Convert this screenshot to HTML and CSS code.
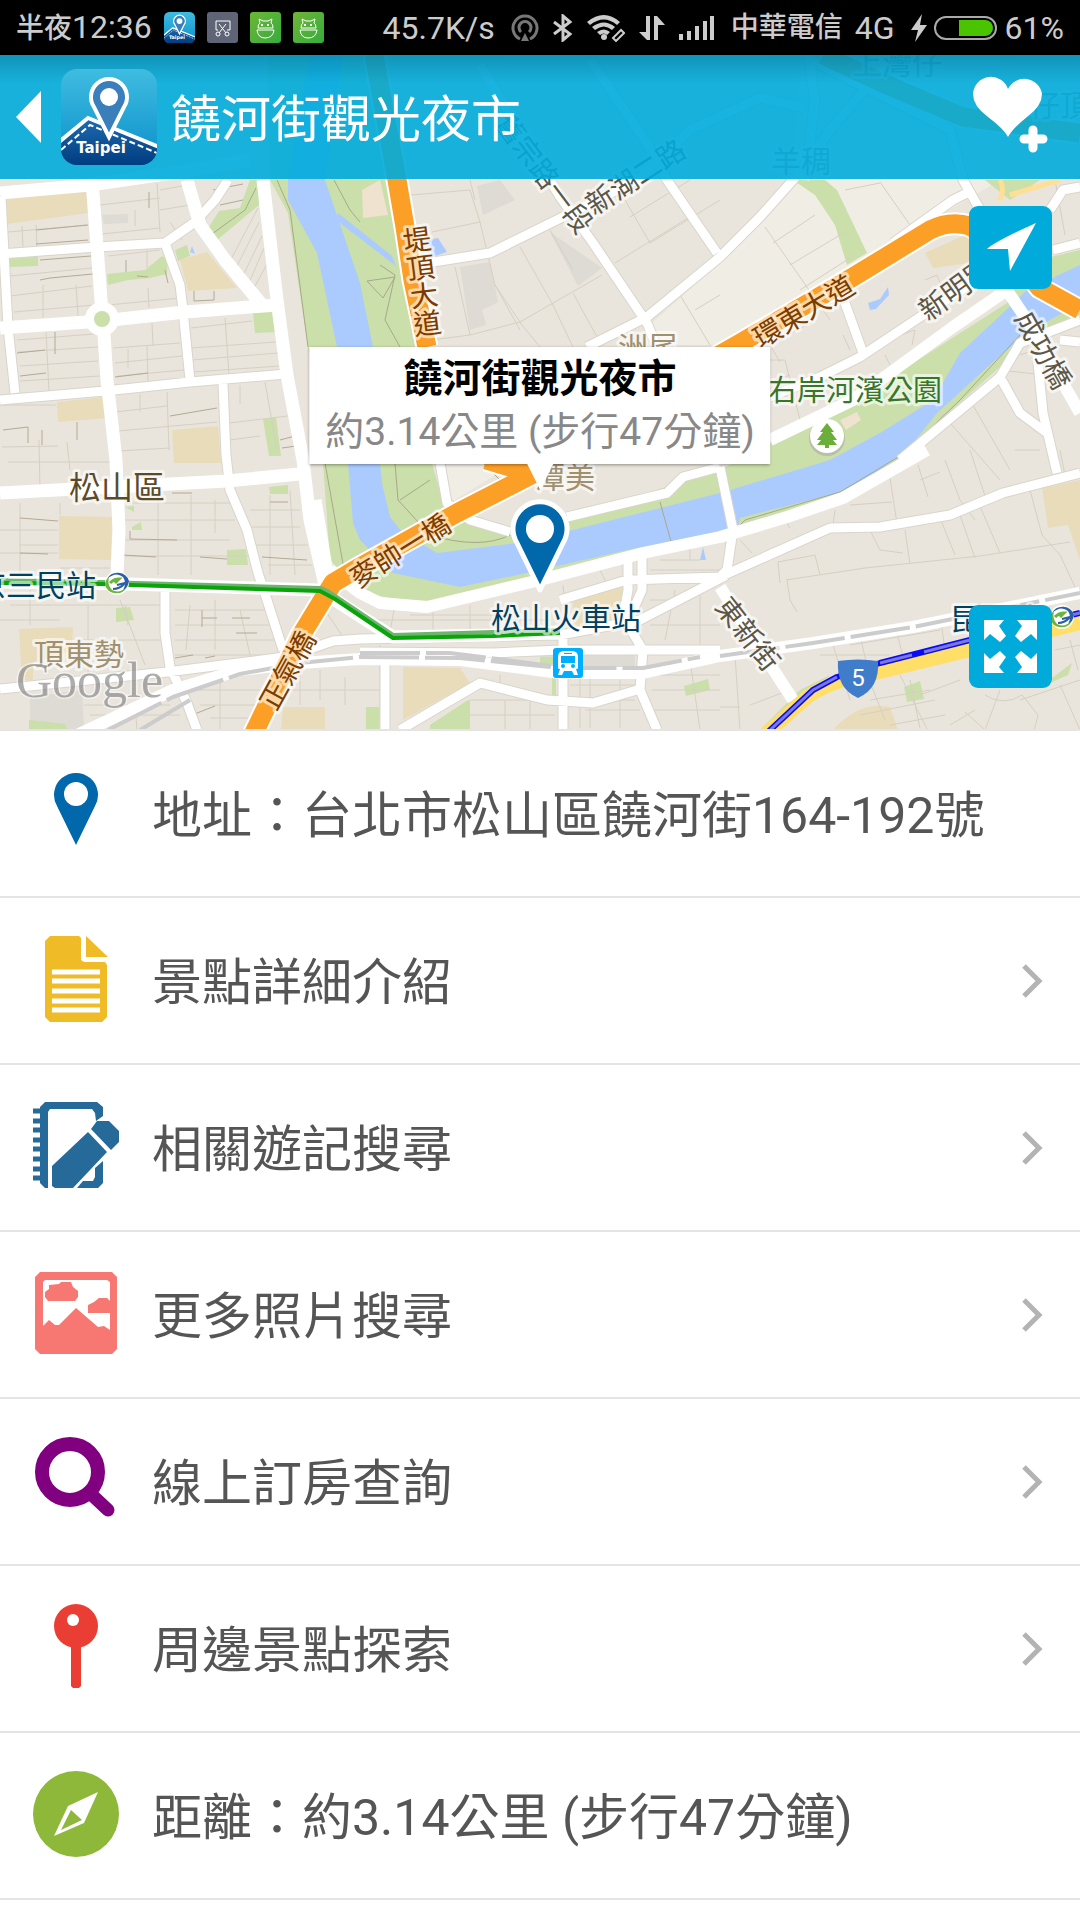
FILE: index.html
```html
<!DOCTYPE html>
<html lang="zh-Hant">
<head>
  <meta charset="UTF-8">
  <meta name="viewport" content="width=device-width, initial-scale=1.0">
  <title>饒河街觀光夜市</title>
  <link rel="stylesheet" href="styles.css">
</head>
<body>
  <!-- shared icons -->
  <svg class="defs" aria-hidden="true">
    <defs>
      <linearGradient id="skyFill" x1="0" y1="0" x2="0" y2="1">
        <stop offset="0" stop-color="#3fbce0"/>
        <stop offset="1" stop-color="#0a8fca"/>
      </linearGradient>
      <linearGradient id="groundFill" x1="0" y1="0" x2="0" y2="1">
        <stop offset="0" stop-color="#1f6cb0"/>
        <stop offset="1" stop-color="#003c80"/>
      </linearGradient>
      <linearGradient id="greenFill" x1="0" y1="0" x2="1" y2="1">
        <stop offset="0" stop-color="#6fb536"/>
        <stop offset="1" stop-color="#35ac3d"/>
      </linearGradient>
      <clipPath id="appClip"><rect width="96" height="96" rx="16"/></clipPath>
    </defs>
    <symbol id="appIcon" viewBox="0 0 96 96">
      <g clip-path="url(#appClip)">
        <rect width="96" height="96" fill="url(#skyFill)"/>
        <path d="M0 72L27 49L96 78V96H0Z" fill="url(#groundFill)"/>
        <path d="M-2 73L27 49L98 78" fill="none" stroke="#fff" stroke-width="4"/>
        <path d="M0 81L29 56L96 84" fill="none" stroke="#fff" stroke-width="2" stroke-dasharray="6 3"/>
        <path d="M48 68L33 38A18 18 0 1 1 63 38Z" fill="#3a7fbb" stroke="#fff" stroke-width="4"/>
        <circle cx="48" cy="28" r="9" fill="#fff"/>
        <text x="40" y="84" class="app-name" text-anchor="middle">Taipei</text>
      </g>
    </symbol>
    <symbol id="droidIcon" viewBox="0 0 31 31">
      <rect width="31" height="31" rx="3" fill="url(#greenFill)"/>
      <path d="M8 16Q8 12 10 11L9 7L13 9H18L22 7L21 11Q23 12 23 16ZM7 18H24Q23 26 15 26Q8 26 7 18Z" fill="none" stroke="#fff" stroke-width="1"/>
      <path d="M12 12v2M18 12v2" stroke="#fff" stroke-width="2"/>
    </symbol>
    <symbol id="metroIcon" viewBox="0 0 28 28">
      <circle cx="14" cy="14" r="12" fill="#fff"/>
      <path d="M4 10A12 12 0 0 1 26 12Q25 19 20 21Q24 14 20 8Q13 2 4 10Z" fill="#2c5fa5"/>
      <path d="M24 18A12 12 0 0 1 2 16Q2 11 6 8Q4 16 9 21Q16 25 24 18Z" fill="#6cb33f"/>
      <path d="M7 14Q11 10 16 10L12 14" fill="none" stroke="#6cb33f" stroke-width="3"/>
      <path d="M10 20Q17 20 22 14L14 16" fill="none" stroke="#2c5fa5" stroke-width="2"/>
    </symbol>
    <symbol id="chevron" viewBox="0 0 24 36">
      <path d="M3 3L18 18L3 33" fill="none" stroke="#b3b3b3" stroke-width="5"/>
    </symbol>
  </svg>

  <div class="status-bar">
    <div class="status-group">
      <span class="clock"><span class="cjk">半夜</span>12:36</span>
      <svg class="notice"><use href="#appIcon"/></svg>
      <svg class="notice" viewBox="0 0 31 31">
        <rect width="31" height="31" rx="3" fill="#5f6577"/>
        <path d="M11 18H9V9H23V18H20M12 12L19 21M19 12L12 21" fill="none" stroke="#fff" stroke-width="1"/>
        <circle cx="11" cy="22" r="2" fill="none" stroke="#fff"/>
        <circle cx="20" cy="22" r="2" fill="none" stroke="#fff"/>
      </svg>
      <svg class="notice"><use href="#droidIcon"/></svg>
      <svg class="notice"><use href="#droidIcon"/></svg>
    </div>
    <div class="status-group">
      <span>45.7K/s</span>
      <div class="signals">
        <svg width="28" height="30" viewBox="0 0 28 30" fill="none" stroke="#777" stroke-width="3">
          <path d="M9 26A12 12 0 1 1 19 26M10 19A6 6 0 1 1 18 19"/>
          <path d="M10 28L14 20L18 28Z" fill="#777" stroke="none"/>
        </svg>
        <svg width="20" height="28" viewBox="0 0 20 28" fill="none" stroke="#ccc" stroke-width="3">
          <path d="M1 8L17 20L10 26V2L17 8L1 20"/>
        </svg>
        <svg width="38" height="28" viewBox="0 0 38 28">
          <path d="M0 8Q17 -6 33 8L30 11Q17 0 3 11ZM5 13Q17 4 28 13L25 16Q17 9 8 16ZM10 18Q17 13 23 18L20 21Q17 18 13 21Z" fill="#ccc"/>
          <circle cx="17" cy="23" r="3" fill="#ccc"/>
          <path d="M30 20l4 -4l3 3l-5 5M31 19l-5 5l3 3l4 -4" fill="none" stroke="#ccc" stroke-width="2"/>
        </svg>
        <svg width="26" height="26" viewBox="0 0 26 26" fill="#ccc">
          <path d="M7 1h4v24H8L0 17H7ZM15 25V1h3l8 9h-7v15Z"/>
        </svg>
        <svg width="36" height="26" viewBox="0 0 36 26" fill="#ccc">
          <path d="M0 19h4v6H0zM8 16h4v9H8zM16 11h4v14h-4zM24 6h4v19h-4zM31 1h4v24h-4z"/>
        </svg>
      </div>
      <span class="carrier"><span class="cjk">中華電信</span> <span>4G</span></span>
      <div class="battery">
        <svg width="16" height="28" viewBox="0 0 16 28" fill="#ccc">
          <path d="M11 0L0 16H7L4 28L16 11H9Z"/>
        </svg>
        <svg width="64" height="26" viewBox="0 0 64 26">
          <rect x="1" y="2" width="61" height="22" rx="11" fill="none" stroke="#aaa" stroke-width="2"/>
          <path d="M25 5H51A8 8 0 0 1 51 21H25Z" fill="#4bc400"/>
        </svg>
        <span>61%</span>
      </div>
    </div>
  </div>

  <div class="map">
    <svg class="map-canvas" viewBox="0 55 1080 674" preserveAspectRatio="xMidYMid slice">
      <rect y="55" width="1080" height="674" fill="#e9e5dc"/>
      <path class="pale" d="M800 55H1000V180L893 243L740 345H660L650 325L720 262L793 180ZM443 463H515L450 503Z"/>
      <path class="block" d="M477 186L500 180L515 200L483 215ZM460 267L490 262L498 302L482 310L486 325L470 330ZM550 232L602 268L578 286ZM102 215L128 214L128 223L104 224ZM30 697L82 690L84 730L30 730ZM540 655H635V668H540Z"/>
      <path class="school" d="M4 198L86 188L88 213L7 224ZM180 260L207 252L237 288L188 291ZM57 402L104 397L107 418L58 422ZM172 430L218 426L221 463H174ZM59 516L112 517L111 560L59 559ZM19 629L73 627L72 650L33 663V680H22ZM283 707H325V730H281ZM403 667L460 668L470 683L403 720ZM573 593L627 587L613 623L573 627ZM1042 488L1080 480V523L1048 528ZM833 730Q860 700 890 707L898 730ZM925 253L970 233V263L933 268ZM1068 525L1080 523V560Z"/>

      <!-- river and parks -->
      <path class="park" d="M268 55H372L387 180L403 247L415 347L432 463L443 503L470 525L510 535L560 520L720 470L770 443L853 400L907 367L1007 303L1030 262L1080 250V315L1027 343L940 420L905 455L843 493L787 512L720 535L640 552L493 590Q420 612 360 590L330 560L323 463L308 347L288 213L270 180Z"/>
      <path class="park" d="M793 180H825L837 190L867 253L847 265L835 225L815 195ZM10 258L38 257V266L10 267ZM107 274L145 270L162 256L168 260L167 274L150 278L128 280L108 285ZM175 250L187 245L190 256L178 261ZM206 232L219 211L240 208L250 180H258L259 205L217 240ZM253 313L277 310L278 332L255 333ZM263 419L276 417L281 456L269 456ZM227 550L246 549L248 565H227ZM116 608L130 607L134 620L116 622ZM125 507L134 506L134 512ZM132 527L141 522L142 530H132ZM29 720L65 724L68 730H29ZM366 707H379V730H366ZM430 725L468 700H470V730H430ZM684 686L708 679L710 690L686 696ZM904 687L920 681L924 699L907 702ZM1052 678L1072 663L1068 675L1052 682ZM760 730L800 690L830 675L780 730ZM985 180H1040L1010 200ZM269 487L288 485V494H270ZM540 657H560L556 664H540ZM552 678H556V695H552Z"/>
      <path class="water" d="M310 55H343L325 180L360 283L373 347L380 463L382 483L390 517L403 533L437 553L517 543L573 530L720 493L830 460L880 433L933 400L960 353L1003 313L1027 290L1080 265V303L1027 333L1003 353L937 413L910 447Q870 480 837 493L740 518L737 530L720 532L627 550L527 573L460 587L393 573L360 540L353 523L348 463L337 347L317 253L288 200V180Z"/>
      <path class="water" d="M428 240L438 238L447 252L432 257ZM338 213L392 256L396 266L336 220ZM868 303L880 299L888 287L889 295L876 309L870 310ZM700 560L703 547L706 560ZM190 252L192 246L195 254Z"/>
      <path d="M840 420L857 412L861 420L846 430ZM362 190L380 180L388 215L363 218Z" fill="#efe2cf"/>

      <!-- lanes -->
      <path class="lane" d="M8 232L87 225M10 276L92 268M10 296L92 286M22 226L23 247M36 225L37 247M43 285L43 318M76 285L78 316M14 312L94 305M100 205L160 198M102 234L160 228M157 183L160 232M135 210V226M160 210L190 205M160 190L182 186M170 222L182 240M108 256L160 250M147 250V268M148 288L149 308M108 305L180 298M17 340L94 334M18 352L98 347M20 366L98 361M20 381L100 376M46 332L49 392M113 348L180 343M115 363L182 356M118 376L184 370M152 323L153 346M128 349V368M147 346L148 382M191 328L252 321M191 348L276 342M192 360L278 353M193 372L280 366M225 318L229 375M228 265L258 208M235 270L259 222M242 278L262 236M248 285L264 248M253 290L268 262M115 412L167 406M118 431L217 422M118 451L170 448M140 394L140 412M167 392L169 450M229 423L288 416M230 440L260 436M240 385V404M265 382L277 450M0 405H56M2 447L58 446M39 440L40 490M67 442L70 470M8 462H110M20 503V575M60 503V515M20 545H58M0 530H58M0 553H58M60 568H115M125 503H240M158 495V575M191 495V575M215 500V533M125 520H235M125 540H230M125 556H255M270 495V575M290 490L295 575M250 510H300M250 527H300M255 545H308M268 565H312M10 605H160M30 590V625M88 605V680M120 600L145 665M0 620H60M80 640H163M125 605L128 625M175 610H265M175 625H270M175 640H278M175 655H278M215 600V650M240 610L250 655M190 605L186 650M84 705H170M90 715H180M135 705L137 730M185 690H260M200 705H270M210 718H265M220 680V730M300 670V705M320 670V700M290 690H380M325 610L345 640M345 677V705M380 645V730M395 605L390 632M433 607V635M470 605V630M500 603V620M360 620H550M410 615H500M563 585L566 618M600 570L608 586M650 570H720M690 545V560M660 560H700M650 600H690M675 590L665 640M700 590V650M650 625H720M580 678V728M590 678V728M620 680V728M570 685H635M570 700H635M470 700H555M470 715H555M505 700V730M530 700V730M585 710H640M500 675V690M690 660L700 730M652 690H720M652 710H720M660 675H720"/>
      <path class="lane" d="M411 195L470 190L480 222L495 285L522 325L540 347M432 232L480 222M470 180L475 200M520 247L552 303L573 347M495 285L520 330M432 340L470 335L520 322L602 275M455 267L470 335M573 293L597 337M625 200L650 243M630 217L690 180M615 263L688 218M650 243L720 200M550 230L573 270M680 295L710 345M695 310L720 295M765 227L830 320M773 243L815 215M790 265L845 232M800 290L850 258M780 310L842 274M735 335L870 256M812 322L770 345M880 182L910 225M845 190L880 183M925 280L937 275L945 295M843 335L850 350M880 345L900 335L915 330L912 345M885 355L895 375M770 360H785L800 420M775 380L790 375M770 345L780 362M1000 370L1045 375M1020 355L1050 345M1055 180L1065 235M930 400L1000 480M970 400L1010 470M945 460L960 500L975 520M970 450L988 505M918 465L928 497M920 480L940 472M890 478L898 530M850 505L892 502M835 510L833 525M785 520L790 528M780 583L778 562L815 555L820 575M786 580L865 568L980 556L1070 542M787 580L790 600L797 612M871 532L880 550L903 553M905 530L910 564M940 518L955 555M960 515L975 558M980 506L1000 553M1030 490L1042 535L1060 555L1075 587M1015 450H1040M1060 450L1065 475M740 540L752 553M833 645L850 700M860 635L868 670M895 625L905 665M940 615L945 650M820 655H890M850 645L940 630M870 682L885 720M900 675L930 735M910 680L920 728M870 700L930 690M860 715L935 700M890 725L945 715M920 695L960 680M735 655L740 730M720 707H740M750 705L790 690M1020 700L1080 680M1060 685L1080 730M1055 650L1080 645M1070 640L1078 670M985 695A32 32 0 0 0 1022 695M965 712L985 730L1000 690M1022 695L1038 715L1033 735M975 710L950 725"/>
      <path class="lane dark" d="M36 230L88 225M36 244L88 240M149 192L149 208M40 260L91 256M40 280L50 278L93 274M126 260V272M137 276L148 277M194 291V301L214 300V291M17 353L45 350M20 376L46 373M55 332V354M115 377L148 373M170 416L217 408M3 430L28 427V443M42 430V445M77 422V440M280 440L295 436M282 448L296 446M20 518L58 521M20 553L48 554M130 531V539L177 540M123 555L156 557M200 557L227 559M262 557L307 560M270 502H288M172 493H192M202 610V627M202 618H217M232 618H250M236 633H257M175 658L193 655M205 658L215 656M192 715L215 706M213 190L243 184M220 205L243 200M165 270L168 283"/>
      <path class="path" d="M277 180L290 210L308 347M325 463L345 575M735 530L745 520L840 492L905 453L960 400L1020 335M212 234L245 210L256 188M334 180L350 210L360 222M380 265L395 275L385 320L400 347M367 281L395 277L383 298ZM395 463L398 500L430 535Q480 550 510 535M400 500L430 480M470 450L500 480M660 502L672 545M365 595L385 603"/>

      <!-- street casing, then street fill -->
      <g class="casing">
        <path id="wide" d="M0 193L90 185L165 174L250 160M92 180L101 300L103 320L107 380L116 460L119 530L117 574M187 180L200 225L225 260L262 305M0 328L102 321L185 312L277 305M263 180L277 300L287 375L303 460L310 520L325 585M0 493L113 487L227 481L310 473M0 582L127 584L320 590L360 616L393 637L493 635L560 632M315 500L328 580"/>
        <path id="thin" d="M1 197L8 327L15 393M0 254L97 247L165 243L195 222L215 200L228 180M165 243L180 285L183 310L190 380M0 400L105 391L190 382L286 374M223 384L226 455L230 490L247 530L258 573L267 600L283 650M165 592V633L170 667L187 703L197 730M0 689L167 672L277 658L307 650L333 641L360 639L560 635L640 620L727 575M360 652L493 653L560 650H720M385 657V730M587 347L647 317L720 257L760 217L793 180L830 130L890 60M480 65L560 197L593 243L647 323L657 347M427 263L490 253L577 210L637 180L690 130L760 98L805 108M590 60L645 140L667 180L717 253M805 180L815 100L808 55M810 60L950 130L963 180L983 215M893 243L953 200L973 190M1053 250L1080 243M1050 210L1063 190L1080 187M770 397L820 377L860 357L920 317L1007 260M845 303L863 353M900 460L1000 377L1020 343L1080 320M1000 377L1020 413L1047 433M1037 353L1043 413L1057 473M720 577L830 528L880 527L950 515L1003 493L1080 473M720 467L733 530L727 570L720 577M567 517L667 493L683 477L720 467M440 463L447 503L470 520L510 532M563 637V730M400 730L480 683L547 700L593 703L637 690M628 557V590L623 617L643 650L640 690L657 730M642 555V590L630 617M560 600L627 580L720 577M1060 340L1080 342"/>
        <path id="main" d="M770 440L853 400L953 327L1007 290M1000 280L1027 320L1080 413M927 450L843 498L787 517L720 537L643 553L540 580L427 607L380 603L360 593L330 570M720 587L793 700M77 735L173 690L240 670L300 663L360 659L460 660L560 673H643L720 656L813 643L913 627L1080 593"/>
      </g>
      <g class="street">
        <use href="#wide" stroke-width="13"/>
        <use href="#thin" stroke-width="9"/>
        <use href="#main" stroke-width="12"/>
      </g>
      <circle cx="102" cy="319" r="17" fill="#fff"/>
      <circle cx="102" cy="319" r="8" fill="#cadfaa"/>
      <path class="rail" d="M108 730L173 697L240 674L300 663L360 657L460 658L560 668H643L700 657M140 730L190 700M360 653H450L560 667M720 656L813 643L913 627L1080 593"/>

      <!-- highways -->
      <path class="ramp" d="M1000 180Q1005 190 1000 200M1010 195L1060 180"/>
      <path class="orange-case" d="M374 55L397 180L405 227L413 280L427 347M486 460L533 474L457 513L403 543L360 567L333 583L300 637L253 735M640 400L737 345L853 277L930 230Q950 220 970 226Q1010 250 1040 288L1080 310M823 55L880 82L963 117L1080 133"/>
      <path class="orange" d="M374 55L397 180L405 227L413 280L427 347M486 460L533 474L457 513L403 543L360 567L333 583L300 637L253 735M640 400L737 345L853 277L930 230Q950 220 970 226Q1010 250 1040 288L1080 310M823 55L880 82L963 117L1080 133"/>
      <path class="yellow" d="M765 735L807 697Q835 678 880 672L970 650L1080 623"/>
      <path class="line-blue" d="M768 732L813 690L837 677L880 663L970 640L1080 613"/>
      <path class="line-blue light" d="M768 732L813 690L837 677M880 663L912 655M924 652L970 640L1080 613"/>
      <path class="line-green light" d="M0 580L100 582L320 588Q327 590 335 596L393 635L493 632L560 630"/>
      <path class="line-green" d="M0 583L100 584L320 591L335 599L393 638L493 636L560 633"/>

      <!-- place names -->
      <g class="label">
        <text x="69" y="499" class="district">松山區</text>
        <text x="34" y="665" class="area">頂東勢</text>
        <text x="618" y="358" class="area">洲尾</text>
        <text x="535" y="488" class="area">潭美</text>
        <text x="852" y="74" class="area">上灣仔</text>
        <text x="771" y="172" class="area">羊稠</text>
        <text x="1030" y="116" class="area">仔頂</text>
        <text x="-24" y="596" class="station">京三民站</text>
        <text x="491" y="629" class="station">松山火車站</text>
        <text x="950" y="630" class="station">昆陽站</text>
        <text x="768" y="401" class="park-name">右岸河濱公園</text>
        <text class="highway vertical" transform="translate(413 226) rotate(-7)">堤頂大道</text>
        <text class="highway" transform="translate(358 589) rotate(-32)">麥帥一橋</text>
        <text class="highway" transform="translate(276 712) rotate(-61)">正氣橋</text>
        <text class="highway" transform="translate(761 349) rotate(-31)">環東大道</text>
        <text class="road" transform="translate(594 216) rotate(-33)">新湖二路</text>
        <text class="road" transform="translate(928 322) rotate(-36)">新明路</text>
        <text class="road" transform="translate(494 124) rotate(53)">舊宗路一段</text>
        <text class="road" transform="translate(1014 318) rotate(61)">成功橋</text>
        <text class="road" transform="translate(714 607) rotate(52)">東新街</text>
      </g>
      <text x="16" y="697" class="google">Google</text>

      <use href="#metroIcon" x="103" y="569" width="28" height="28"/>
      <use href="#metroIcon" x="1048" y="603" width="28" height="28"/>
      <g transform="translate(553 648)">
        <rect width="30" height="30" rx="3" fill="#00aeff"/>
        <path d="M5 20V9Q5 3 11 3H19Q25 3 25 9V20Q25 21 23 21L25 27H21L19 23H11L9 27H5L7 21Q5 21 5 20Z" fill="#fff"/>
        <path d="M8 8H22V15H8ZM11 5H19V6H11Z" fill="#00aeff"/>
        <circle cx="10" cy="18" r="2" fill="#00aeff"/>
        <circle cx="20" cy="18" r="2" fill="#00aeff"/>
      </g>
      <g transform="translate(827 436)">
        <circle cy="2" r="18" fill="#b9bfa9"/>
        <circle r="17" fill="#fff"/>
        <path d="M0 -13L7 -4H4L10 4H6L10 9H2V12H-2V9H-10L-6 4H-10L-4 -4H-7Z" fill="#6cae3a"/>
      </g>
      <path d="M838 661Q858 658 878 661Q880 688 858 698Q836 688 838 661Z" fill="#3f7cc9"/>
      <text x="858" y="686" class="shield" text-anchor="middle">5</text>

      <path d="M540 590L517 543A27 27 0 1 1 563 543Z" fill="#0068ab" stroke="#fff" stroke-width="5"/>
      <circle cx="540" cy="529" r="14" fill="#fff"/>
    </svg>

    <header class="title-bar">
      <button class="icon-button" aria-label="返回">
        <svg width="26" height="52" viewBox="0 0 26 52"><path d="M25 0V52L0 26Z" fill="#fff"/></svg>
      </button>
      <svg class="app-icon"><use href="#appIcon"/></svg>
      <h1>饒河街觀光夜市</h1>
      <button class="icon-button favorite" aria-label="加入最愛">
        <svg width="76" height="78" viewBox="0 0 76 78" fill="#fff">
          <path d="M35 61Q31 53 15 41Q0 30 0 18A18 18 0 0 1 35 13A18 18 0 0 1 69 18Q69 30 54 41Q39 53 35 61Z"/>
          <path d="M60 54V72M51 63H70" fill="none" stroke="#fff" stroke-width="9" stroke-linecap="round"/>
        </svg>
      </button>
    </header>

    <div class="callout">
      <strong>饒河街觀光夜市</strong>
      <span>約3.14公里 (步行47分鐘)</span>
    </div>

    <div class="map-tools">
      <button class="map-button" aria-label="定位">
        <svg viewBox="0 0 83 83" fill="#fff"><path d="M67 17L41 65L39 43L18 43Q27 35 67 17Z"/></svg>
      </button>
      <button class="map-button" aria-label="全螢幕">
        <svg viewBox="0 0 83 83" fill="#fff">
          <path id="arrow" d="M15 15H35L30 21L37 31L31 37L21 29L15 35Z"/>
          <use href="#arrow" transform="matrix(-1 0 0 1 83 0)"/>
          <use href="#arrow" transform="matrix(1 0 0 -1 0 83)"/>
          <use href="#arrow" transform="matrix(-1 0 0 -1 83 83)"/>
        </svg>
      </button>
    </div>
  </div>

  <ul class="info-list">
    <li>
      <div class="row">
        <svg class="row-icon" viewBox="0 0 88 88">
          <path d="M44 77L25 38A22 22 0 1 1 63 38ZM44 14A12 12 0 1 0 44 38A12 12 0 1 0 44 14Z" fill="#0068ab" fill-rule="evenodd"/>
        </svg>
        <span>地址：台北市松山區饒河街164-192號</span>
      </div>
    </li>
    <li>
      <a class="row" href="#intro">
        <svg class="row-icon" viewBox="0 0 88 88" fill="#efbc28">
          <path d="M18 1H47L49 3V25L52 27H73L75 30V82L70 87H18L13 82V6ZM54 1L76 22H54Z"/>
          <path d="M20 37H68M20 46H68M20 56H68M20 66H68M20 75H68" stroke="#fff" stroke-width="5"/>
        </svg>
        <span>景點詳細介紹</span>
        <svg class="chevron"><use href="#chevron"/></svg>
      </a>
    </li>
    <li>
      <a class="row" href="#notes">
        <svg class="row-icon" viewBox="0 0 88 88" fill="#256a98">
          <path d="M13 0H65L71 5V14L64 19L63 11L60 7H18L16 10V86H13L8 81V5Z"/>
          <path d="M1 9H8M1 19H8M1 28H8M1 38H8M1 47H8M1 57H8M1 67H8M1 76H8" stroke="#256a98" stroke-width="5"/>
          <path d="M56 30L75 50L41 86H23L20 84V64ZM65 19H77L87 29V40L79 48L59 27ZM71 59V81L66 86H45L51 79H61L63 75V66Z"/>
        </svg>
        <span>相關遊記搜尋</span>
        <svg class="chevron"><use href="#chevron"/></svg>
      </a>
    </li>
    <li>
      <a class="row" href="#photos">
        <svg class="row-icon" viewBox="0 0 88 88" fill="#f77773">
          <path d="M8 3H80L85 8V80L80 85H8L3 80V8ZM13 11L11 13V57L17 51L23 56H27L44 39L66 58L72 57L78 61V13L75 11Z" fill-rule="evenodd"/>
          <path d="M16 32L13 28V23L17 20V16L27 15L29 13H39L41 18L46 22V28L43 32ZM56 44V36L62 33L67 29H75L79 33V44Z"/>
        </svg>
        <span>更多照片搜尋</span>
        <svg class="chevron"><use href="#chevron"/></svg>
      </a>
    </li>
    <li>
      <a class="row" href="#hotels">
        <svg class="row-icon" viewBox="0 0 88 88" fill="none" stroke="#800080">
          <circle cx="38" cy="36" r="28" stroke-width="14"/>
          <path d="M60 59L76 74" stroke-width="13" stroke-linecap="round"/>
        </svg>
        <span>線上訂房查詢</span>
        <svg class="chevron"><use href="#chevron"/></svg>
      </a>
    </li>
    <li>
      <a class="row" href="#nearby">
        <svg class="row-icon" viewBox="0 0 88 88" fill="#ea3e34">
          <path d="M39 40H49V83L47 85H41L39 83Z"/>
          <circle cx="44" cy="23" r="22"/>
          <circle cx="41" cy="17" r="6" fill="#fff"/>
        </svg>
        <span>周邊景點探索</span>
        <svg class="chevron"><use href="#chevron"/></svg>
      </a>
    </li>
    <li>
      <div class="row">
        <svg class="row-icon" viewBox="0 0 88 88">
          <circle cx="44" cy="44" r="43" fill="#8db83a"/>
          <path d="M66 22L52 53L22 66L36 36Z" fill="#fff"/>
          <path d="M39 40L50 50L29 60Z" fill="#8db83a"/>
        </svg>
        <span>距離：約3.14公里 (步行47分鐘)</span>
      </div>
    </li>
  </ul>
</body>
</html>
```
FILE: styles.css
```css
* {
  box-sizing: border-box;
}
body {
  margin: 0;
  background-color: #fff;
  color: #555;
  font-family: Roboto, "Noto Sans CJK TC", sans-serif;
}
button {
  padding: 0;
  border: none;
  background: none;
  cursor: pointer;
}
.defs {
  position: absolute;
  width: 0;
  height: 0;
}
.app-name {
  font: bold 15px "DejaVu Sans", sans-serif;
  fill: #fff;
}

/* Status bar */
.status-bar {
  display: flex;
  justify-content: space-between;
  align-items: center;
  height: 55px;
  padding: 0 16px;
  background-color: #000;
  color: #ccc;
  font-size: 32px;
  line-height: 32px;
  white-space: nowrap;
}
.status-group {
  display: flex;
  align-items: center;
  gap: 12px;
}
.status-group + .status-group {
  gap: 16px;
}
.signals {
  display: flex;
  align-items: center;
  gap: 14px;
}
.carrier {
  display: flex;
  align-items: center;
  gap: 12px;
}
.battery {
  display: flex;
  align-items: center;
  gap: 7px;
}
.cjk {
  font-size: 28px;
  font-weight: 500;
}
.notice {
  width: 31px;
  height: 31px;
}

/* Map */
.map {
  position: relative;
  border-bottom: 2px solid #e4e4e4;
}
.map-canvas {
  display: block;
  width: 100%;
  height: 674px;
}
.map-canvas path {
  stroke-linejoin: round;
}
.pale { fill: #f0ede5; }
.block { fill: #dedad4; }
.school { fill: #e8dcba; }
.park { fill: #cadfaa; }
.water { fill: #abcbff; }
.lane {
  fill: none;
  stroke: #d6d0c2;
  stroke-width: 1;
}
.dark { stroke: #b3aa94; }
.path {
  fill: none;
  stroke: #a9a88a;
  stroke-width: 1;
}
.casing {
  fill: none;
  stroke: #d9d5cb;
  stroke-width: 11;
}
#wide, #thin, #main { fill: none; }
.street {
  fill: none;
  stroke: #fff;
}
.rail {
  fill: none;
  stroke: #ccc;
  stroke-width: 4;
  stroke-dasharray: 60 6;
}
.orange, .orange-case, .yellow, .ramp, .line-blue, .line-green { fill: none; }
.orange-case {
  stroke: #fff;
  stroke-width: 23;
}
.orange {
  stroke: #fb9f27;
  stroke-width: 19;
}
.ramp {
  stroke: #ffdf95;
  stroke-width: 5;
}
.yellow {
  stroke: #ffdf67;
  stroke-width: 14;
}
.line-blue {
  stroke: #0a0af5;
  stroke-width: 6;
}
.line-blue.light {
  stroke: #7a78d8;
  stroke-width: 3;
}
.line-green {
  stroke: #0ba30b;
  stroke-width: 4;
}
.line-green.light { stroke: #6db56d; }
.label {
  font-size: 30px;
  paint-order: stroke;
  stroke: rgba(255, 255, 255, 0.6);
  stroke-width: 6px;
  stroke-linejoin: round;
}
.district {
  font-size: 32px;
  fill: #5b4a2a;
}
.area { fill: #a0906e; }
.station { fill: #00415f; }
.park-name {
  font-size: 29px;
  fill: #38762a;
}
.highway {
  font-size: 28px;
  fill: #7a3c00;
}
.road {
  font-size: 28px;
  fill: #5c5647;
}
.vertical { writing-mode: vertical-rl; }
.google {
  font: 50px "Liberation Serif", serif;
  fill: #777;
  fill-opacity: 0.6;
  stroke: #fff;
  stroke-opacity: 0.5;
  stroke-width: 3px;
  paint-order: stroke;
}
.shield {
  font-size: 24px;
  fill: #fff;
}

/* Title bar over the map */
.title-bar {
  position: absolute;
  top: 0;
  left: 0;
  right: 0;
  display: flex;
  align-items: center;
  height: 124px;
  padding: 0 31px 0 16px;
  background: linear-gradient(rgba(0, 60, 80, 0.25), rgba(0, 60, 80, 0) 28px), rgba(0, 171, 219, 0.9);
}
.title-bar h1 {
  flex: 1;
  margin: 0 0 0 14px;
  padding-top: 5px;
  color: #fff;
  font-size: 50px;
  font-weight: 400;
  line-height: 60px;
}
.icon-button svg {
  display: block;
}
.favorite {
  margin-bottom: 5px;
}
.app-icon {
  width: 96px;
  height: 96px;
  margin-left: 19px;
}

/* Callout above the pin */
.callout {
  position: absolute;
  top: 292px;
  left: 50%;
  transform: translateX(-50%);
  display: flex;
  flex-direction: column;
  align-items: center;
  padding: 6px 16px 5px;
  background-color: #fff;
  box-shadow: 0 1px 3px rgba(0, 0, 0, 0.4);
  color: #888;
  font-size: 39px;
  line-height: 53px;
  white-space: nowrap;
}
.callout strong {
  color: #000;
}
.callout::after {
  content: "";
  position: absolute;
  top: 100%;
  left: 50%;
  margin-left: -13px;
  border: 13px solid transparent;
  border-top: 26px solid #fff;
  border-bottom: none;
}
.map-tools {
  position: absolute;
  top: 151px;
  right: 28px;
  bottom: 41px;
  display: flex;
  flex-direction: column;
  justify-content: space-between;
}
.map-button {
  width: 83px;
  height: 83px;
  border-radius: 9px;
  background-color: #00abdb;
}
.map-button svg {
  display: block;
}

/* Info rows */
.info-list {
  margin: 0;
  padding: 0;
  list-style: none;
}
.info-list li {
  border-bottom: 2px solid #e4e4e4;
}
.row {
  display: flex;
  align-items: center;
  gap: 32px;
  height: 165px;
  padding: 0 35px 0 32px;
  color: #555;
  font-size: 50px;
  line-height: 60px;
  text-decoration: none;
}
.row span {
  flex: 1;
  padding-top: 5px;
}
.row-icon {
  width: 88px;
  height: 88px;
  margin-bottom: 3px;
}
.chevron {
  width: 24px;
  height: 36px;
}
```
